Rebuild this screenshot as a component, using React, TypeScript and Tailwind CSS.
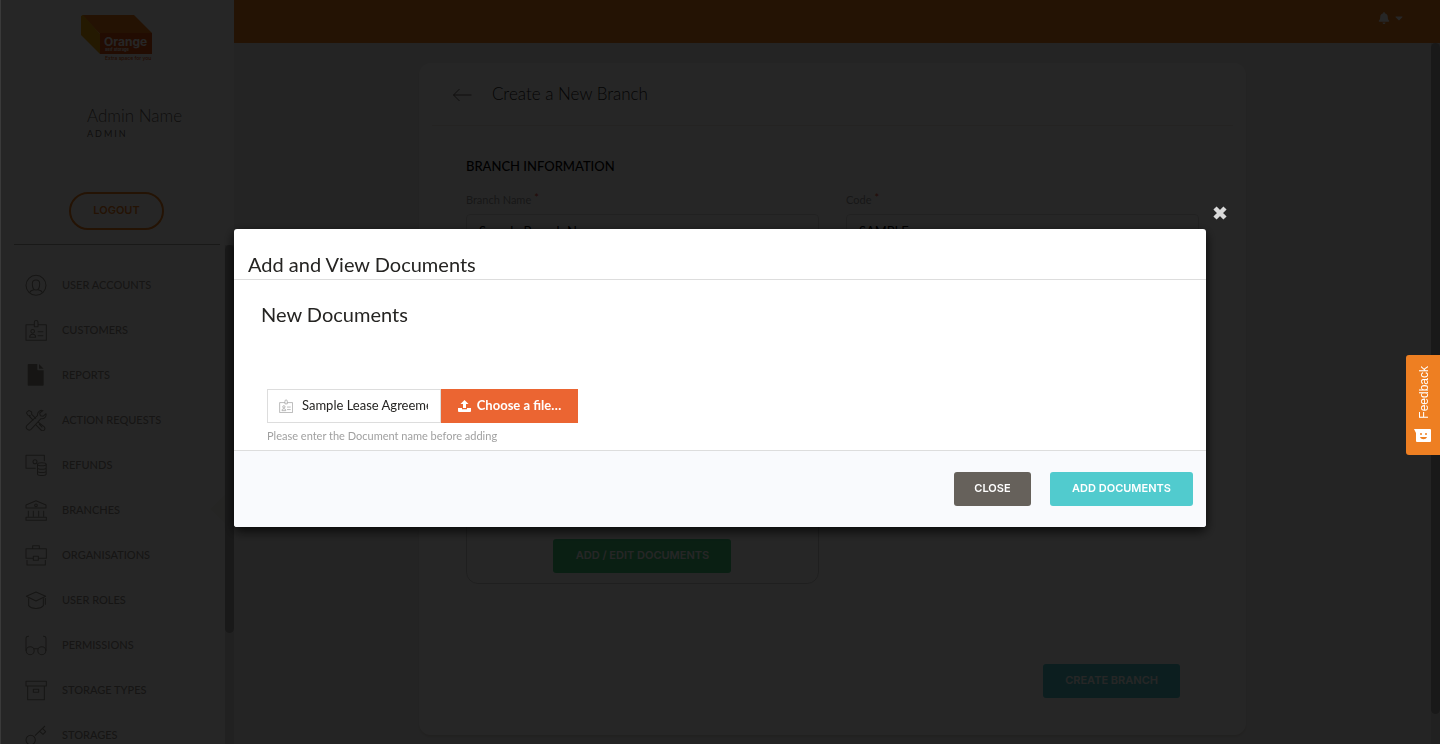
import React from "react";
import { FaBell, FaCaretDown } from "react-icons/fa";

const svgProps = {
  viewBox: "0 0 66 66",
  fill: "none",
  stroke: "currentColor",
  strokeWidth: 3.2,
  strokeLinejoin: "round" as const,
  "aria-hidden": true,
};

function BadgeIcon({ className }: { className: string }) {
  return (
    <svg {...svgProps} className={className}>
      <path d="M28 17H3v47h61V17H39" />
      <path d="M28 10a5.500 5.500 0 0 1 11 0v13H28z" />
      <circle cx="23" cy="37" r="5.500" />
      <path d="M14 55c0-6 3-9 9-9s9 3 9 9zM38 38h17M38 50h17" />
    </svg>
  );
}

const items: { label: string; icon: React.ReactNode }[] = [
  {
    label: "USER ACCOUNTS",
    icon: (
      <>
        <circle cx="33" cy="34" r="30" />
        <path d="M22 29c0-7 4-11 11-11s11 4 11 11c0 9-3 19-11 19s-11-10-11-19z" />
        <path d="M14 56c2-6 6-8 13-9M52 56c-2-6-6-8-13-9" />
      </>
    ),
  },
  { label: "CUSTOMERS", icon: null },
  {
    label: "REPORTS",
    icon: (
      <path
        fill="currentColor"
        stroke="none"
        d="M8 2a2 2 0 0 1 2-2h27v16a3 3 0 0 0 3 3h16v44a2 2 0 0 1-2 2H10a2 2 0 0 1-2-2zM42 0l14 14H42z"
      />
    ),
  },
  {
    label: "ACTION REQUESTS",
    icon: (
      <>
        <path d="M4 11l8-7 8 5v7l13 13M12 21l13 13M4 11l5 8 8 1" />
        <path d="M54 5c-8-3-18 4-16 14L6 49c-7 8 4 19 12 12l30-32c9 2 17-5 15-15l-9 8-8-2-2-8z" />
        <path d="M39 39l18 14c8 8-3 16-9 10L32 47M42 45l10 10" />
      </>
    ),
  },
  {
    label: "REFUNDS",
    icon: (
      <>
        <path d="M32 43H3V4h55v18" />
        <circle cx="30" cy="23" r="6" />
        <ellipse cx="50.500" cy="31" rx="13" ry="4.500" />
        <path d="M37.500 31v29c0 6 26 6 26 0V31M37.500 41c0 6 26 6 26 0M37.500 51c0 6 26 6 26 0" />
      </>
    ),
  },
  {
    label: "BRANCHES",
    icon: (
      <>
        <path d="M3 18L33 5l30 13v9H3zM3 55h61v9H3z" />
        <circle cx="33" cy="19" r="4" />
        <path d="M10 35v18M25 35v18M41 35v18M56 35v18" />
      </>
    ),
  },
  {
    label: "ORGANISATIONS",
    icon: (
      <>
        <path d="M25 43H3V14h61v29H40M23 14V5h20v9M25 37h15v12H25zM6 48v15h55V48" />
      </>
    ),
  },
  {
    label: "USER ROLES",
    icon: (
      <>
        <path d="M4 22L33 9l29 13-29 14z" />
        <path d="M11 28v22c8 11 36 11 44 0V28M61 27v20" />
      </>
    ),
  },
  {
    label: "PERMISSIONS",
    icon: (
      <>
        <circle cx="15.500" cy="50" r="12" />
        <circle cx="50.500" cy="50" r="12" />
        <path d="M27 44h12M3 50V14c0-5 3-8 9-7M63 50V14c0-5-3-8-9-7" />
      </>
    ),
  },
  {
    label: "STORAGE TYPES",
    icon: (
      <>
        <path d="M3 7h61v14H3zM8 21v41h50V21M25 31h16v9H25z" />
      </>
    ),
  },
  {
    label: "STORAGES",
    icon: (
      <>
        <circle cx="17" cy="48" r="14" />
        <path d="M30 35L60 6M44 22l10 9 8-8-9-9" />
      </>
    ),
  },
];

function Logo() {
  return (
    <svg viewBox="0 0 72 48" className="h-12 w-[72px]" role="img" aria-label="Orange Self Storage">
      <path fill="#f07a17" d="M1 0h52l18 18v1H19z" />
      <path fill="#f2a50c" d="M2 0L0 1v19l19 19V19z" />
      <path fill="#e2500f" d="M19 18h52v21H19z" />
      <text x="23" y="31" fill="#fff" fontFamily="Inter, sans-serif" fontWeight="700" fontSize="12">
        Orange
      </text>
      <text x="24" y="36" fill="#fff" fontFamily="Inter, sans-serif" fontWeight="700" fontSize="4">
        Self Storage
      </text>
      <text x="24" y="45" fill="#e2500f" fontFamily="Inter, sans-serif" fontWeight="500" fontSize="5">
        Extra space for you
      </text>
    </svg>
  );
}

function Sidebar() {
  return (
    <aside className="flex w-[234px] shrink-0 flex-col overflow-hidden bg-white">
      <div className="flex h-[245px] shrink-0 flex-col pt-[15px]">
        <div className="pl-[81px]">
          <Logo />
        </div>
        <div className="pt-[41px] pl-[87px] text-[#66615b]">
          <p className="text-[17px] leading-6 font-light">Admin Name</p>
          <p className="text-[9px] leading-3 tracking-[2px]">ADMIN</p>
        </div>
        <div className="pt-[52px] pl-[69px]">
          <button className="h-[38px] w-[95px] rounded-full border-2 border-[#ef7d1e] pb-px font-[Inter] text-[11px] font-semibold text-[#ef7d1e]">
            LOGOUT
          </button>
        </div>
        <div className="mx-[14px] mt-auto border-b border-[#a8a8a0]" />
      </div>
      <div className="flex min-h-0 flex-1">
        <nav className="flex-1 overflow-hidden pt-[17px]">
          {items.map((it) => (
            <a
              key={it.label}
              href="#"
              className="relative flex h-[45px] items-center gap-[15px] pl-[25px] text-[11px] text-[#949089]"
            >
              {it.icon ? (
                <svg {...svgProps} className="size-[22px]">
                  {it.icon}
                </svg>
              ) : (
                <BadgeIcon className="size-[22px]" />
              )}
              <span className="pt-[2px] font-medium">{it.label}</span>
              {it.label === "BRANCHES" && (
                <svg viewBox="0 0 15 28" className="absolute top-2 right-0 h-7 w-[15px]" aria-hidden>
                  <path fill="#f4f3ef" d="M15 0v28L0 14z" />
                </svg>
              )}
            </a>
          ))}
        </nav>
        <div className="w-[9px] bg-[#dcdcdc]">
          <div className="h-[388px] rounded-full bg-[#a8a8a8]" />
        </div>
      </div>
    </aside>
  );
}

function Field({ id, label, value }: { id: string; label: string; value: string }) {
  return (
    <div className="flex flex-col">
      <label htmlFor={id} className="flex gap-[3px] text-[11px] leading-4 text-[#9a9a9a]">
        {label}
        <span className="leading-3 text-[#eb3a28]">*</span>
      </label>
      <input
        id={id}
        defaultValue={value}
        className="mt-[6px] h-[34px] rounded border border-[#dddddd] bg-white px-3 text-[13px] text-black"
      />
    </div>
  );
}

function BranchPage() {
  return (
    <main className="min-h-0 flex-1 overflow-hidden pt-5">
      <section className="mx-auto w-[69.1%] rounded-xl bg-white shadow-[0_2px_2px_rgba(204,197,185,0.5)]">
        <header className="mx-[13px] flex h-[63px] items-center gap-5 border-b border-[#f1eae0] pl-5">
          <a href="#" aria-label="Back" className="pt-[2px] text-[#66615b]">
            <svg viewBox="0 0 19 14" className="h-[14px] w-5" fill="none" stroke="currentColor" aria-hidden>
              <path d="M7 1L1 7l6 6M1 7h18" />
            </svg>
          </a>
          <h1 className="text-[17px] font-light text-[#252422]">Create a New Branch</h1>
        </header>
        <div className="px-[47px] pt-[30px] pb-[37px]">
          <h2 className="text-[13px] leading-5 font-medium text-black">BRANCH INFORMATION</h2>
          <div className="grid grid-cols-2 gap-x-[27px] pt-4">
            <Field id="branch-name" label="Branch Name" value="Sample Branch Name" />
            <Field id="branch-code" label="Code" value="SAMPLE" />
          </div>
          <div className="grid grid-cols-2 gap-x-[27px] pt-[200px]">
            <div className="flex h-[136px] items-end justify-center rounded-xl border border-[#d0d0d0] pb-[10px]">
              <button className="h-[34px] w-[178px] rounded-[3px] bg-[#43cf80] pb-px font-[Inter] text-[11px] font-semibold text-white">
                ADD / EDIT DOCUMENTS
              </button>
            </div>
          </div>
          <div className="flex justify-end pt-20 pr-[19px]">
            <button className="h-[34px] w-[137px] rounded-[3px] bg-[#51cbce] pb-px font-[Inter] text-[11px] font-semibold text-white">
              CREATE BRANCH
            </button>
          </div>
        </div>
      </section>
    </main>
  );
}

function DocumentsDialog() {
  return (
    <div className="fixed inset-0 flex items-start justify-center bg-black/85 pt-[229px] shadow-[inset_1px_0_0_#3a3a3a]">
      <div
        role="dialog"
        aria-modal="true"
        aria-labelledby="dialog-title"
        className="relative w-[67.5%] rounded-[3px] bg-white text-[#252422] shadow-[0_4px_12px_rgba(0,0,0,0.8)]"
      >
        <button aria-label="Close dialog" className="absolute -top-[23px] -right-[21px] text-[#d9d9d9]">
          <svg viewBox="0 0 14 14" className="size-[14px]" stroke="currentColor" strokeWidth="4.500" aria-hidden>
            <path d="M2 2l10 10M12 2L2 12" />
          </svg>
        </button>
        <h2 id="dialog-title" className="border-b border-[#dddddd] px-[14px] pt-[21px] pb-px text-[20px] leading-7">
          Add and View Documents
        </h2>
        <div className="px-[27px] pt-5 pb-[5px]">
          <h3 className="text-[20px] leading-7">New Documents</h3>
          <div className="pt-[61px] pl-[6px]">
            <div className="flex h-[34px]">
              <div className="flex w-[174px] items-center gap-[9px] border border-[#dddddd] pr-3 pb-px pl-[11px]">
                <BadgeIcon className="size-[14px] shrink-0 text-[#9a9a9a]" />
                <input
                  id="doc-name"
                  aria-label="Document name"
                  defaultValue="Sample Lease Agreement"
                  className="min-w-0 flex-1 bg-transparent pt-px text-[13px] text-[#252422] outline-none"
                />
              </div>
              <button className="flex w-[137px] items-center justify-center gap-[6px] bg-[#eb6532] text-[13px] font-bold text-white">
                <svg viewBox="0 0 13 12" className="h-3 w-[13px]" fill="currentColor" aria-hidden>
                  <path d="M6.500 0l4 4H8v4H5V4H2.500zM0 8h4v1.200h5V8h4v3a1 1 0 0 1-1 1H1a1 1 0 0 1-1-1z" />
                </svg>
                Choose a file…
              </button>
            </div>
            <label htmlFor="doc-name" className="mt-1 block text-[11px] leading-[18px] text-[#a0a0a0]">
              Please enter the Document name before adding
            </label>
          </div>
        </div>
        <footer className="flex h-[77px] items-start justify-end gap-[19px] rounded-b-[3px] border-t border-[#dddddd] bg-[#f9fafd] px-[13px] pt-[21px] font-[Inter] text-[11px] font-semibold text-white">
          <button className="h-[34px] w-[77px] rounded-[3px] bg-[#66615b] pb-px">CLOSE</button>
          <button className="h-[34px] w-[143px] rounded-[3px] bg-[#51cbce] pb-px">ADD DOCUMENTS</button>
        </footer>
      </div>
    </div>
  );
}

export default function App() {
  return (
    <div className="flex h-screen overflow-hidden bg-[#f0f0f0] font-[Lato,sans-serif]">
      <Sidebar />
      <div className="flex min-w-0 flex-1 flex-col">
        <div className="flex h-[43px] shrink-0 items-start justify-end gap-[3px] bg-[#ef7d1e] pt-3 pr-[35px] text-white">
          <FaBell className="size-3" />
          <FaCaretDown className="size-3" />
        </div>
        <div className="flex min-h-0 flex-1">
          <BranchPage />
          <div className="w-[9px] bg-[#dcdcdc]">
            <div className="h-[671px] rounded-full bg-[#a8a8a8]" />
          </div>
        </div>
      </div>
      <DocumentsDialog />
      <button className="fixed top-[355px] right-0 flex h-[100px] w-[34px] flex-col items-center justify-end gap-[10px] rounded-l-[3px] bg-[#ee7f22] pb-3 font-['Liberation_Sans'] text-[12px] text-white">
        <span className="rotate-180 pr-px [writing-mode:vertical-rl]">Feedback</span>
        <svg viewBox="0 0 18 14" className="h-[14px] w-[18px]" aria-hidden>
          <path fill="#fff" d="M0 0h16a1 1 0 0 1 1 1v11a1 1 0 0 1-1 1H3a1 1 0 0 1-1-1V4z" />
          <circle cx="7" cy="5" r="1" fill="#ee7f22" />
          <circle cx="12" cy="5" r="1" fill="#ee7f22" />
          <path d="M6 8c1 3 6 3 7 0z" fill="#ee7f22" />
        </svg>
      </button>
    </div>
  );
}
